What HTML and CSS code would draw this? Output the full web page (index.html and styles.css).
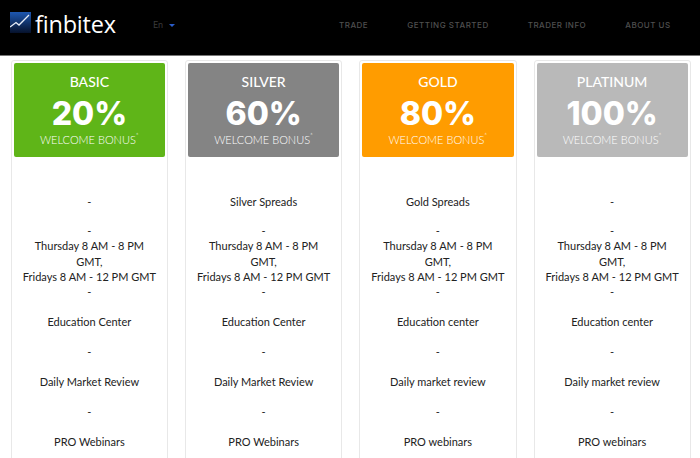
FILE: index.html
```html
<!DOCTYPE html>
<html lang="en">
<head>
<meta charset="utf-8">
<title>Finbitex</title>
<link rel="stylesheet" href="styles.css">
</head>
<body>
<header class="topbar">
  <div class="brand">
    <svg class="mark" width="21" height="21" viewBox="0 0 21 21">
      <defs><linearGradient id="g" x1="0" y1="0" x2="0" y2="1"><stop offset="0" stop-color="#1d57b0"/><stop offset="1" stop-color="#06122c"/></linearGradient></defs>
      <rect width="21" height="21" fill="url(#g)"/>
      <path d="M0 15 L6 10.5 L9 13 L19 3" fill="none" stroke="#e8eef8" stroke-width="1.3"/>
    </svg>
    <span class="wordmark">finbitex</span>
  </div>
  <div class="lang">En<span class="caret"></span></div>
  <nav class="nav">
    <a>TRADE</a><a>GETTING STARTED</a><a>TRADER INFO</a><a>ABOUT US</a>
  </nav>
</header>
<main class="plans">
  <section class="card">
    <div class="panel basic"><h2>BASIC</h2><div class="pct">20%</div><div class="bonus">WELCOME BONUS<sup>*</sup></div></div>
    <div class="features">
      <p class="row">-</p><p class="dash">-</p>
      <p class="hours">Thursday 8 AM - 8 PM GMT,<br>Fridays 8 AM - 12 PM GMT</p><p class="dash2">-</p>
      <p class="row">Education Center</p><p class="row">-</p><p class="row">Daily Market Review</p><p class="row">-</p><p class="row">PRO Webinars</p>
    </div>
  </section>
  <section class="card">
    <div class="panel silver"><h2>SILVER</h2><div class="pct">60%</div><div class="bonus">WELCOME BONUS<sup>*</sup></div></div>
    <div class="features">
      <p class="row">Silver Spreads</p><p class="dash">-</p>
      <p class="hours">Thursday 8 AM - 8 PM GMT,<br>Fridays 8 AM - 12 PM GMT</p><p class="dash2">-</p>
      <p class="row">Education Center</p><p class="row">-</p><p class="row">Daily Market Review</p><p class="row">-</p><p class="row">PRO Webinars</p>
    </div>
  </section>
  <section class="card">
    <div class="panel gold"><h2>GOLD</h2><div class="pct">80%</div><div class="bonus">WELCOME BONUS<sup>*</sup></div></div>
    <div class="features">
      <p class="row">Gold Spreads</p><p class="dash">-</p>
      <p class="hours">Thursday 8 AM - 8 PM GMT,<br>Fridays 8 AM - 12 PM GMT</p><p class="dash2">-</p>
      <p class="row">Education center</p><p class="row">-</p><p class="row">Daily market review</p><p class="row">-</p><p class="row">PRO webinars</p>
    </div>
  </section>
  <section class="card">
    <div class="panel platinum"><h2>PLATINUM</h2><div class="pct">100%</div><div class="bonus">WELCOME BONUS<sup>*</sup></div></div>
    <div class="features">
      <p class="row">-</p><p class="dash">-</p>
      <p class="hours">Thursday 8 AM - 8 PM GMT,<br>Fridays 8 AM - 12 PM GMT</p><p class="dash2">-</p>
      <p class="row">Education center</p><p class="row">-</p><p class="row">Daily market review</p><p class="row">-</p><p class="row">PRO webinars</p>
    </div>
  </section>
</main>
</body>
</html>
```
FILE: styles.css
```css
* { box-sizing: border-box; }
html, body { margin: 0; height: 458px; overflow: hidden; background: #fff; }
body { font-family: "Lato", "Open Sans", sans-serif; color: #222; }

.topbar {
  height: 56px;
  background: #000;
  border-bottom: 1px solid #777;
  display: flex;
  align-items: flex-start;
  padding-left: 10px;
}
.brand { display: flex; align-items: center; gap: 4px; width: 143px; height: 40px; padding-top: 8px; flex: none; }
.mark { display: block; margin-top: -3px; }
.wordmark { font-family: "Open Sans", sans-serif; font-size: 23.5px; color: #fff; line-height: 30px; letter-spacing: -0.2px; }
.lang { font-size: 9px; color: #3a3a3a; line-height: 12px; margin-top: 19px; display: flex; align-items: center; gap: 6px; width: 186px; flex: none; }
.caret { width: 0; height: 0; border: 3px solid transparent; border-top-color: #2a5cc8; border-bottom: 0; }
.nav { display: flex; gap: 39px; margin-top: 19px; font-family: "Inter", sans-serif; font-size: 8px; font-weight: 500; letter-spacing: 0.5px; line-height: 12px; color: #4f4f4f; white-space: nowrap; }

.plans { display: grid; grid-template-columns: repeat(4, 174.25px); padding: 4px 0 0 2.25px; }
.card { margin: 0 8.5px; height: 420px; border: 1px solid #e8e8e8; border-radius: 3px; padding: 2px 2px 0; }

.panel { height: 94px; border-radius: 2px; color: #fff; text-align: center; padding-top: 11px; }
.basic { background: #5fb518; }
.silver { background: #848484; }
.gold { background: #ff9c00; }
.platinum { background: #b9b9b9; }
.panel h2 { margin: 0; font-size: 14px; font-weight: 500; line-height: 16px; }
.pct { font-family: "Inter", sans-serif; font-size: 32px; font-weight: 800; line-height: 36px; margin-top: 6px; }
.bonus { font-size: 11px; font-weight: 300; line-height: 14px; margin-top: 1px; }
.bonus sup { font-size: 7px; line-height: 0; }

.features { text-align: center; font-size: 11px; padding: 37px 8.5px 0; }
.features p { margin: 0; }
.row { line-height: 15px; margin-bottom: 15px !important; }
.dash { line-height: 14px; }
.hours { line-height: 15.5px; }
.dash2 { line-height: 14px; margin-bottom: 15px !important; }
```
